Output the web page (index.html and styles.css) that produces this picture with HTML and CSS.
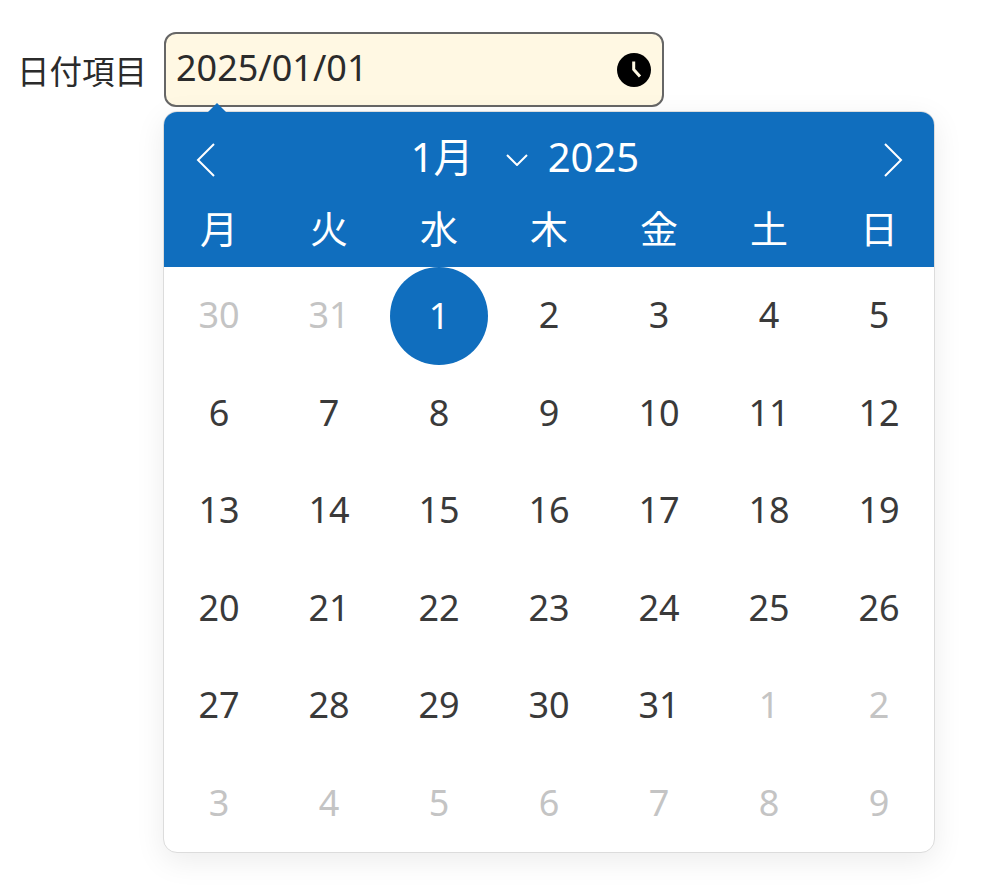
FILE: index.html
```html
<!DOCTYPE html>
<html lang="ja">
<head>
  <meta charset="UTF-8">
  <title>日付項目</title>
  <link rel="stylesheet" href="styles.css">
</head>
<body>
  <div class="field">
    <label class="field-label">日付項目</label>
    <div class="picker">
      <div class="input">
        <span class="input-value">2025/01/01</span>
        <svg class="clock" width="34" height="34" viewBox="0 0 34 34"><circle cx="17" cy="17" r="17" fill="#000"/><path d="M16.7 8.5V16.5L23 23.5" fill="none" stroke="#fff8e3" stroke-width="3"/></svg>
      </div>

      <div class="calendar">
        <span class="arrow"></span>
        <div class="cal-head">
          <div class="cal-nav">
            <svg class="nav-icon" width="20" height="34" viewBox="0 0 20 34"><path d="M18 1L2 17L18 33" fill="none" stroke="#fff" stroke-width="2"/></svg>
            <div class="cal-title">
              <span class="cal-month">1月</span>
              <svg class="month-caret" width="22" height="12" viewBox="0 0 22 12"><path d="M1 1L11 11L21 1" fill="none" stroke="#fff" stroke-width="2"/></svg>
              <span class="cal-year">2025</span>
            </div>
            <svg class="nav-icon" width="20" height="34" viewBox="0 0 20 34"><path d="M2 1L18 17L2 33" fill="none" stroke="#fff" stroke-width="2"/></svg>
          </div>
          <div class="weekdays">
            <span>月</span><span>火</span><span>水</span><span>木</span><span>金</span><span>土</span><span>日</span>
          </div>
        </div>
        <div class="days">
          <span class="day muted">30</span><span class="day muted">31</span><span class="day selected">1</span><span class="day">2</span><span class="day">3</span><span class="day">4</span><span class="day">5</span>
          <span class="day">6</span><span class="day">7</span><span class="day">8</span><span class="day">9</span><span class="day">10</span><span class="day">11</span><span class="day">12</span>
          <span class="day">13</span><span class="day">14</span><span class="day">15</span><span class="day">16</span><span class="day">17</span><span class="day">18</span><span class="day">19</span>
          <span class="day">20</span><span class="day">21</span><span class="day">22</span><span class="day">23</span><span class="day">24</span><span class="day">25</span><span class="day">26</span>
          <span class="day">27</span><span class="day">28</span><span class="day">29</span><span class="day">30</span><span class="day">31</span><span class="day muted">1</span><span class="day muted">2</span>
          <span class="day muted">3</span><span class="day muted">4</span><span class="day muted">5</span><span class="day muted">6</span><span class="day muted">7</span><span class="day muted">8</span><span class="day muted">9</span>
        </div>
      </div>
    </div>
  </div>
</body>
</html>
```

FILE: styles.css
```css
html, body { margin: 0; padding: 0; background: #fff; }
body { font-family: "Noto Sans", "Noto Sans CJK JP", sans-serif; color: #3a3a3a; height: 896px; overflow: hidden; }

.field { display: flex; align-items: center; padding: 32px 0 0 17px; }
.field-label { width: 147px; font-family: "Noto Sans CJK JP", sans-serif; font-size: 32.5px; line-height: 75px; color: #2b2b2b; }

.picker { position: relative; width: 500px; }
.input { box-sizing: border-box; height: 75px; display: flex; align-items: center; justify-content: space-between; padding: 0 11px 0 10px; background: #fff8e3; border: 2px solid #666; border-radius: 12px; }
.input-value { font-size: 36px; color: #2b2b2b; line-height: 50px; margin-top: -4px; }
.clock { display: block; }

.calendar { position: absolute; top: 79px; left: -1px; width: 772px; height: 742px; box-sizing: border-box; background: #fff; border: 1px solid #dcdcdc; border-radius: 14px; box-shadow: 0 8px 30px rgba(0,0,0,0.08); }
.arrow { position: absolute; top: -9px; left: 43px; width: 0; height: 0; border-left: 10px solid transparent; border-right: 10px solid transparent; border-bottom: 10px solid #106ebe; }

.cal-head { background: #106ebe; color: #fff; border-radius: 13px 13px 0 0; height: 155px; box-sizing: border-box; }
.cal-nav { display: flex; align-items: center; justify-content: space-between; height: 95px; padding: 0 31px 0 32px; }
.cal-title { display: flex; align-items: center; font-size: 40px; line-height: 50px; margin-right: 49px; margin-bottom: 6px; }
.cal-month { width: 95px; }
.month-caret { margin-right: 20px; margin-top: 6px; }

.weekdays { display: grid; grid-template-columns: repeat(7, 110px); font-family: "Noto Sans CJK JP", sans-serif; font-size: 38px; line-height: 40px; text-align: center; }

.days { display: grid; grid-template-columns: repeat(7, 110px); grid-auto-rows: 97.5px; font-size: 36px; }
.day { display: flex; align-items: center; justify-content: center; padding-bottom: 2px; box-sizing: border-box; }
.day.muted { color: #c4c4c4; }
.day.selected { color: #fff; background: #106ebe; border-radius: 50%; width: 98px; height: 98px; justify-self: center; }
```
